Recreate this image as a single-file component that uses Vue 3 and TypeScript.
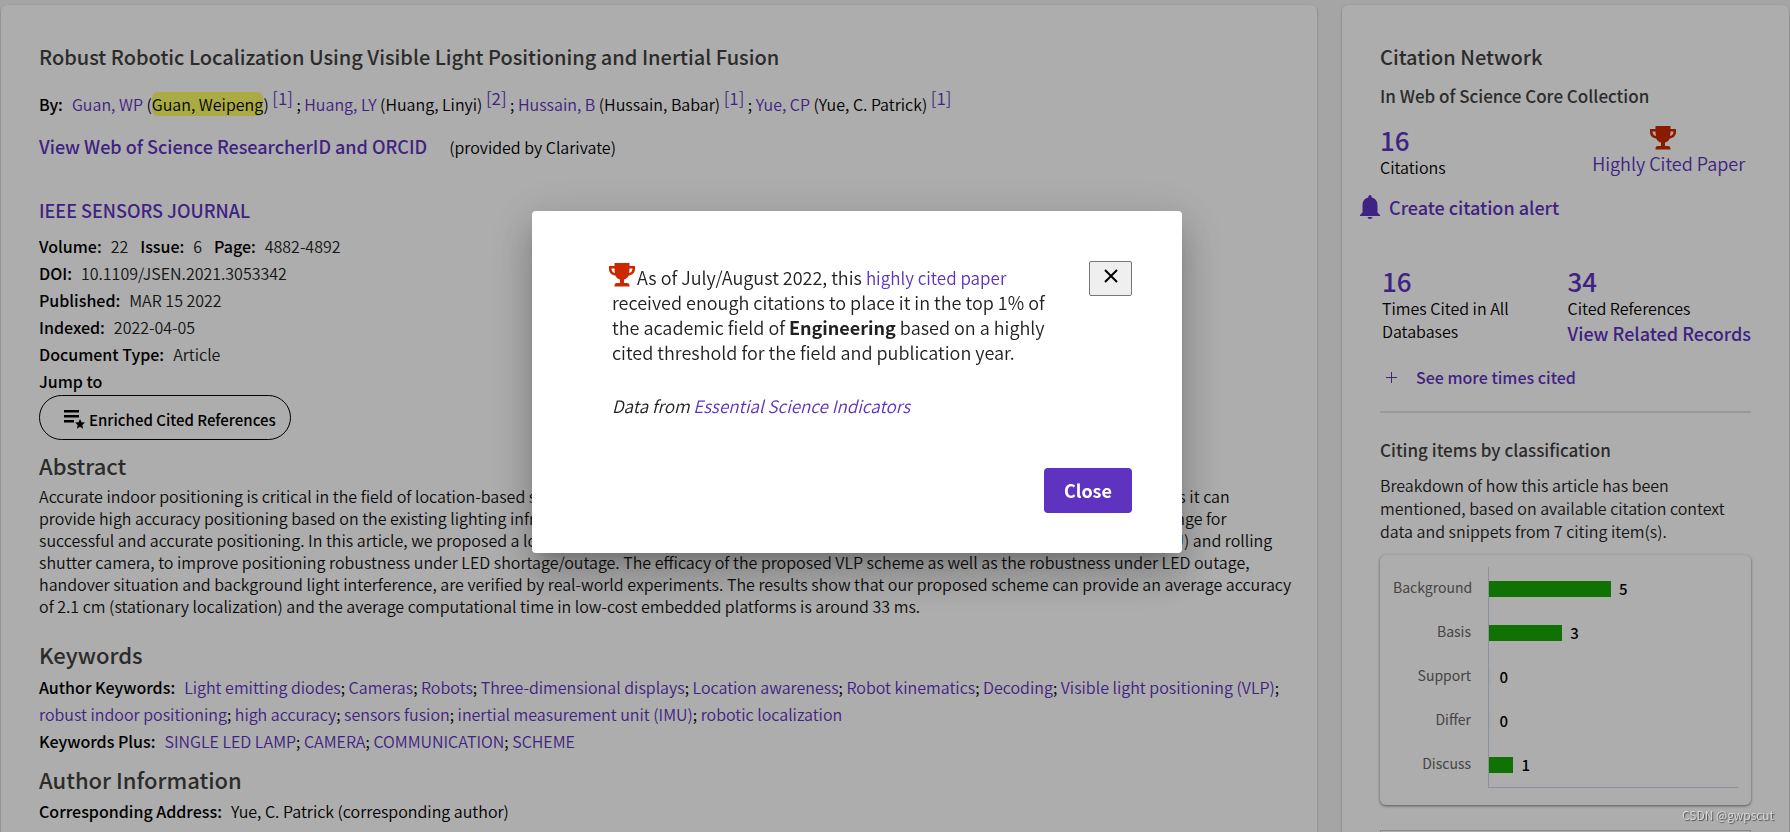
<script setup lang="ts">
import { ref } from 'vue'

interface Author { short: string; full: string; ref: number; marked?: boolean }
interface Bar { label: string; value: number }

const authors: Author[] = [
  { short: 'Guan, WP', full: 'Guan, Weipeng', ref: 1, marked: true },
  { short: 'Huang, LY', full: 'Huang, Linyi', ref: 2 },
  { short: 'Hussain, B', full: 'Hussain, Babar', ref: 1 },
  { short: 'Yue, CP', full: 'Yue, C. Patrick', ref: 1 },
]

const abstractLines: string[] = [
  'Accurate indoor positioning is critical in the field of location-based services. Visible light positioning (VLP) is now often considered a promising technology as it can',
  'provide high accuracy positioning based on the existing lighting infrastructure. However, dense lighting source distributions still present a significant challenge for',
  'successful and accurate positioning. In this article, we proposed a loosely-coupled multiple-sensor fusion approach using an inertial measurement unit (IMU) and rolling',
  'shutter camera, to improve positioning robustness under LED shortage/outage. The efficacy of the proposed VLP scheme as well as the robustness under LED outage,',
  'handover situation and background light interference, are verified by real-world experiments. The results show that our proposed scheme can provide an average accuracy',
  'of 2.1 cm (stationary localization) and the average computational time in low-cost embedded platforms is around 33 ms.',
]

const authorKeywords: string[] = [
  'Light emitting diodes', 'Cameras', 'Robots', 'Three-dimensional displays', 'Location awareness',
  'Robot kinematics', 'Decoding', 'Visible light positioning (VLP)', 'robust indoor positioning',
  'high accuracy', 'sensors fusion', 'inertial measurement unit (IMU)', 'robotic localization',
]
const keywordsPlus: string[] = ['SINGLE LED LAMP', 'CAMERA', 'COMMUNICATION', 'SCHEME']

const bars: Bar[] = [
  { label: 'Background', value: 5 },
  { label: 'Basis', value: 3 },
  { label: 'Support', value: 0 },
  { label: 'Differ', value: 0 },
  { label: 'Discuss', value: 1 },
]
const barWidth = (value: number): string => `${value === 0 ? 1 : value * 9.8}%`

const open = ref(true)
</script>

<template>
  <div class="page">
    <main class="card record">
      <h1 class="title">Robust Robotic Localization Using Visible Light Positioning and Inertial Fusion</h1>
      <p class="authors">
        <b class="label">By:</b><template v-for="(a, i) in authors" :key="a.short"><a href="#">{{ a.short }}</a> (<mark v-if="a.marked">{{ a.full }}</mark><template v-else>{{ a.full }}</template>) <a href="#" class="sup">[{{ a.ref }}]</a><template v-if="i < authors.length - 1"> ; </template></template>
      </p>
      <p class="rid"><a href="#" class="strong-link">View Web of Science ResearcherID and ORCID</a><span>(provided by Clarivate)</span></p>
      <p class="journal"><a href="#" class="strong-link">IEEE SENSORS JOURNAL</a></p>

      <dl class="meta">
        <div><dt>Volume:</dt><dd>22</dd><dt>Issue:</dt><dd>6</dd><dt>Page:</dt><dd>4882-4892</dd></div>
        <div><dt>DOI:</dt><dd>10.1109/JSEN.2021.3053342</dd></div>
        <div><dt>Published:</dt><dd>MAR 15 2022</dd></div>
        <div><dt>Indexed:</dt><dd>2022-04-05</dd></div>
        <div><dt>Document Type:</dt><dd>Article</dd></div>
      </dl>
      <p class="jump">Jump to</p>
      <button type="button" class="pill">
        <svg width="21" height="19" viewBox="0 0 21 19" aria-hidden="true">
          <path d="M0 0h15v2.500H0zM0 5h15v2.500H0zM0 10h10v2.500H0z" />
          <path d="M16 9l1.500 3.300 3.500.3-2.700 2.400.8 3.700L16 16.800l-3.100 1.900.8-3.700-2.700-2.400 3.500-.3z" />
        </svg>
        Enriched Cited References
      </button>

      <h2 class="heading">Abstract</h2>
      <p class="abstract"><span v-for="line in abstractLines" :key="line">{{ line }}</span></p>

      <h2 class="heading keywords-heading">Keywords</h2>
      <p class="keywords">
        <b class="label">Author Keywords:</b><template v-for="(k, i) in authorKeywords" :key="k"><a href="#">{{ k }}</a><template v-if="i < authorKeywords.length - 1">; </template></template>
      </p>
      <p class="keywords">
        <b class="label">Keywords Plus:</b><template v-for="(k, i) in keywordsPlus" :key="k"><a href="#">{{ k }}</a><template v-if="i < keywordsPlus.length - 1">; </template></template>
      </p>

      <h2 class="heading author-heading">Author Information</h2>
      <p class="keywords"><b class="label">Corresponding Address:</b>Yue, C. Patrick (corresponding author)</p>
    </main>

    <aside class="card network">
      <h2 class="title">Citation Network</h2>
      <h3 class="subtitle">In Web of Science Core Collection</h3>
      <div class="summary">
        <div>
          <a href="#" class="count">16</a>
          <span class="caption">Citations</span>
        </div>
        <a href="#" class="highly">
          <svg class="trophy" width="26" height="24" viewBox="0 0 26 24" aria-hidden="true">
            <path fill-rule="evenodd" d="M5.500 0h15v3H26v3c0 3.600-2.600 6-6.200 6.500-1 2-2.600 3.500-4.800 4V20h3c1.800 0 2.500 1 2.500 3v.5h-15V23c0-2 .7-3 2.500-3h3v-3.500c-2.200-.5-3.800-2-4.800-4C2.600 12 0 9.600 0 6V3h5.500zM2.500 5.500c0 2.300 1.200 4 3.500 4.600-.4-1.400-.5-3-.5-4.600zM23.500 5.500h-3c0 1.600-.1 3.200-.5 4.600 2.300-.6 3.500-2.300 3.500-4.600z" />
          </svg>
          Highly Cited Paper
        </a>
      </div>
      <a href="#" class="alert strong-link">
        <svg width="20" height="24" viewBox="0 0 20 24" aria-hidden="true">
          <path d="M8.300 2.500V1.700a1.700 1.700 0 0 1 3.400 0v.8C15.500 3.300 17.500 6.300 17.500 10v7.500L20 20v1H0v-1l2.500-2.500V10c0-3.700 2-6.700 5.800-7.500zM7.600 22h4.800c0 1.200-1 2-2.400 2s-2.400-.8-2.400-2z" />
        </svg>
        Create citation alert
      </a>
      <div class="counts">
        <div>
          <a href="#" class="count">16</a>
          <span class="caption">Times Cited in All Databases</span>
        </div>
        <div>
          <a href="#" class="count">34</a>
          <span class="caption">Cited References</span>
          <a href="#" class="strong-link related">View Related Records</a>
        </div>
      </div>
      <button type="button" class="more">
        <svg width="11" height="11" viewBox="0 0 11 11" aria-hidden="true"><path d="M5 0h1v5h5v1H6v5H5V6H0V5h5z" /></svg>
        See more times cited
      </button>
      <hr>
      <h3 class="subtitle">Citing items by classification</h3>
      <p class="breakdown">Breakdown of how this article has been mentioned, based on available citation context data and snippets from 7 citing item(s).</p>
      <div class="chart">
        <div class="labels"><span v-for="b in bars" :key="b.label">{{ b.label }}</span></div>
        <div class="plot">
          <div v-for="b in bars" :key="b.label" class="row">
            <i :class="{ empty: b.value === 0 }" :style="{ width: barWidth(b.value) }"></i>
            <b>{{ b.value }}</b>
          </div>
        </div>
      </div>
      <div class="next-box"></div>
    </aside>
  </div>

  <div v-if="open" class="backdrop">
    <section class="dialog" role="dialog" aria-modal="true">
      <div class="dialog-top">
        <div class="message">
          <p>
            <svg class="trophy" width="26" height="24" viewBox="0 0 26 24" aria-hidden="true">
              <path fill-rule="evenodd" d="M5.500 0h15v3H26v3c0 3.600-2.600 6-6.200 6.500-1 2-2.600 3.500-4.800 4V20h3c1.800 0 2.500 1 2.500 3v.5h-15V23c0-2 .7-3 2.500-3h3v-3.500c-2.200-.5-3.800-2-4.800-4C2.600 12 0 9.600 0 6V3h5.500zM2.500 5.500c0 2.300 1.200 4 3.500 4.600-.4-1.400-.5-3-.5-4.600zM23.500 5.500h-3c0 1.600-.1 3.200-.5 4.600 2.300-.6 3.500-2.300 3.500-4.600z" />
            </svg>As of July/August 2022, this <a href="#">highly cited paper</a> received enough citations to place it in the top 1% of the academic field of <strong>Engineering</strong> based on a highly cited threshold for the field and publication year.
          </p>
          <p class="source">Data from <a href="#">Essential Science Indicators</a></p>
        </div>
        <button type="button" class="dismiss" aria-label="Dismiss" @click="open = false">
          <svg width="14" height="14" viewBox="0 0 14 14" aria-hidden="true"><path d="M1 1l12 12M13 1L1 13" /></svg>
        </button>
      </div>
      <button type="button" class="close" @click="open = false">Close</button>
    </section>
  </div>
  <div class="watermark">CSDN @gwpscut</div>
</template>

<style>
body { background: #f3f3f3; overflow: hidden; }
</style>

<style scoped>
.page, .backdrop, .watermark {
  font-family: "Noto Sans CJK SC", "Source Sans Pro", sans-serif;
  font-size: 16px;
  font-weight: 350;
  color: #000;
}
.page {
  display: grid;
  grid-template-columns: minmax(0, 1fr) 447px;
  gap: 25px;
  padding: 5px 1px 0;
  height: 100vh;
  box-sizing: border-box;
  overflow: hidden;
}
h1, h2, h3, p, dl, dd { margin: 0; }
a { color: #5e33bf; text-decoration: none; }
button { font-family: inherit; cursor: pointer; }
.card {
  background: #fff;
  border-radius: 6px 6px 0 0;
  box-shadow: 0 1px 2px rgba(0, 0, 0, 0.4);
  box-sizing: border-box;
  padding: 38px;
}
.record { padding-right: 28px; }
.title { font-size: 20px; line-height: 28px; font-weight: 500; color: #424242; }
.label { font-weight: 500; margin-right: 9px; }
.strong-link { font-size: 18px; font-weight: 500; }
.authors { margin-top: 19px; line-height: 28px; }
mark { background: #fcfc64; border-radius: 6px; color: inherit; }
.sup { position: relative; top: -6px; font-size: 17px; }
.rid { margin-top: 14px; line-height: 28px; display: flex; align-items: baseline; gap: 22px; }
.journal { margin-top: 35px; line-height: 28px; }
.meta { margin-top: 8px; line-height: 27px; }
.meta div { display: flex; }
.meta dt { font-weight: 500; margin-right: 9px; }
.meta dd { margin-right: 12px; color: #222; }
.jump { line-height: 27px; font-weight: 500; }
.pill {
  display: flex;
  align-items: center;
  gap: 4px;
  height: 45px;
  padding: 3px 14px 0 24px;
  border: 1px solid #000;
  border-radius: 23px;
  background: transparent;
  color: #000;
  font-size: 15px;
  font-weight: 500;
}
.heading { margin-top: 11px; font-size: 22px; line-height: 28px; font-weight: 500; color: #424242; }
.abstract { margin-top: 6px; line-height: 22px; color: #111; }
.abstract span { display: block; white-space: nowrap; }
.keywords-heading { margin-top: 23px; margin-bottom: 6px; }
.author-heading { margin-top: 10px; margin-bottom: 5px; }
.keywords { line-height: 27px; }

.subtitle { font-size: 17px; line-height: 24px; font-weight: 500; color: #424242; margin-top: 13px; }
.summary { display: flex; justify-content: space-between; margin-top: 17px; padding-right: 6px; }
.count { display: block; margin-bottom: 1px; font-size: 26px; line-height: 30px; font-weight: 500; }
.caption { display: block; line-height: 23px; }
.highly { padding-top: 1px; font-size: 18px; line-height: 26px; }
.trophy { fill: #cc2700; }
.highly .trophy { display: block; margin-left: 58px; }
.alert { display: flex; align-items: center; gap: 9px; margin: 14px 0 0 -20px; line-height: 28px; }
.alert svg { fill: #5e33bf; }
.counts { display: grid; grid-template-columns: 136px auto; justify-content: space-between; margin: 45px 0 0 2px; }
.related { display: block; line-height: 26px; white-space: nowrap; }
.more {
  display: flex;
  align-items: center;
  gap: 19px;
  margin-top: 18px;
  padding: 0 0 0 6px;
  border: 0;
  background: none;
  color: #5e33bf;
  font-size: 16px;
  line-height: 26px;
  font-weight: 500;
}
.more svg { fill: #5e33bf; }
hr { border: 0; height: 2px; background: #e0e0ea; margin: 21px 0 0; }
hr + .subtitle { margin-top: 25px; }
.breakdown { margin-top: 12px; line-height: 23px; color: #222; }
.chart {
  display: flex;
  margin-top: 12px;
  padding: 12px 13px 17px;
  border-radius: 6px;
  box-shadow: 0 1px 3px rgba(0, 0, 0, 0.5);
}
.labels { width: 78px; margin-right: 17px; font-size: 14px; font-weight: 400; color: #666; text-align: right; }
.labels span { display: block; height: 44px; line-height: 40px; }
.plot { flex: 1; border-left: 1px solid #ccd6eb; border-bottom: 1px solid #ccd6eb; }
.row { height: 44px; display: flex; align-items: center; gap: 8px; }
.row i { height: 16px; background: #18a803; }
.row i.empty { background: #fafafa; }
.row b { font-size: 15px; line-height: 20px; font-weight: 500; }
.next-box { height: 60px; margin-top: 25px; border: 1px solid #ccc; }

.backdrop {
  position: fixed;
  inset: 0;
  display: flex;
  align-items: center;
  justify-content: center;
  padding: 0 76px 69px 0;
  background: rgba(0, 0, 0, 0.32);
}
.dialog {
  width: 650px;
  box-sizing: border-box;
  padding: 50px 50px 40px 80px;
  border-radius: 4px;
  background: #fff;
  box-shadow: 0 11px 15px -7px rgba(0, 0, 0, 0.2), 0 24px 38px 3px rgba(0, 0, 0, 0.14), 0 9px 46px 8px rgba(0, 0, 0, 0.12);
}
.dialog-top { display: flex; justify-content: space-between; align-items: flex-start; }
.message { width: 442px; padding-top: 2px; font-size: 18px; line-height: 25px; color: #212121; }
.message a { font-size: 17px; }
.message .trophy { margin: 0 2px 0 -3px; vertical-align: -2px; }
.message strong { font-weight: 700; }
.source { margin-top: 28px; font-size: 17px; font-style: italic; }
.dismiss {
  width: 43px;
  height: 35px;
  padding: 0 0 4px;
  border: 1px solid #767676;
  border-radius: 2px;
  background: #efefef;
}
.dismiss svg { display: block; margin: 0 auto; stroke: #000; stroke-width: 2; }
.close {
  display: block;
  height: 45px;
  margin: 50px 0 0 auto;
  padding: 0 20px;
  border: 0;
  border-radius: 4px;
  background: #5e33bf;
  color: #fff;
  font-size: 18px;
  font-weight: 700;
}
.watermark {
  position: fixed;
  right: 16px;
  bottom: 6px;
  font-size: 12px;
  line-height: 22px;
  color: #ddd;
  text-shadow: 1px 1px 1px #444;
}
</style>
